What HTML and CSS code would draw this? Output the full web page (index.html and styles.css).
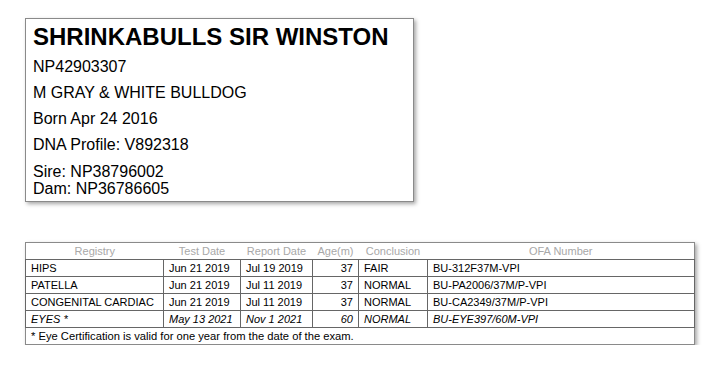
FILE: index.html
```html
<!DOCTYPE html>
<html>
<head>
<meta charset="utf-8">
<link rel="stylesheet" href="styles.css">
</head>
<body>
<div class="page">
  <div class="card">
    <h1 class="name">SHRINKABULLS SIR WINSTON</h1>
    <p class="line">NP42903307</p>
    <p class="line">M GRAY &amp; WHITE BULLDOG</p>
    <p class="line">Born Apr 24 2016</p>
    <p class="line">DNA Profile: V892318</p>
    <p class="line parents">Sire: NP38796002<br>Dam: NP36786605</p>
  </div>
  <table class="ofa">
    <colgroup>
      <col class="c-reg"><col class="c-test"><col class="c-rep"><col class="c-age"><col class="c-con"><col class="c-num">
    </colgroup>
    <thead>
      <tr><th>Registry</th><th>Test Date</th><th>Report Date</th><th>Age(m)</th><th>Conclusion</th><th>OFA Number</th></tr>
    </thead>
    <tbody>
      <tr><td>HIPS</td><td>Jun 21 2019</td><td>Jul 19 2019</td><td class="num">37</td><td>FAIR</td><td>BU-312F37M-VPI</td></tr>
      <tr><td>PATELLA</td><td>Jun 21 2019</td><td>Jul 11 2019</td><td class="num">37</td><td>NORMAL</td><td>BU-PA2006/37M/P-VPI</td></tr>
      <tr><td>CONGENITAL CARDIAC</td><td>Jun 21 2019</td><td>Jul 11 2019</td><td class="num">37</td><td>NORMAL</td><td>BU-CA2349/37M/P-VPI</td></tr>
      <tr class="eyes"><td>EYES *</td><td>May 13 2021</td><td>Nov 1 2021</td><td class="num">60</td><td>NORMAL</td><td>BU-EYE397/60M-VPI</td></tr>
      <tr class="note"><td colspan="6">* Eye Certification is valid for one year from the date of the exam.</td></tr>
    </tbody>
  </table>
</div>
</body>
</html>
```

FILE: styles.css
```css
html, body {
  margin: 0;
  padding: 0;
  background: #fff;
}
body {
  font-family: "Liberation Sans", Arial, sans-serif;
  color: #000;
}
.page {
  padding: 18px 0 0 25px;
  display: flex;
  flex-direction: column;
  align-items: flex-start;
  gap: 40px;
}
.card {
  width: 373px;
  border: 1px solid #8a8a8a;
  padding: 4px 7px 4px 7px;
  box-shadow: 2px 2px 4px rgba(0, 0, 0, 0.35);
}
.name {
  margin: 0;
  font-size: 24px;
  line-height: 27px;
  font-weight: bold;
}
.line {
  margin: 8px 0 0 0;
  font-size: 16px;
  line-height: 18px;
}
.line + .line {
  margin-top: 8px;
}
.line.parents {
  line-height: 17px;
  margin-top: 9px;
}
.ofa {
  width: 670px;
  table-layout: fixed;
  border-collapse: collapse;
  border: 1px solid #8a8a8a;
  box-shadow: 2px 2px 4px rgba(0, 0, 0, 0.35);
  font-size: 11px;
  line-height: 14px;
}
.c-reg { width: 138px; }
.c-test { width: 77px; }
.c-rep { width: 72px; }
.c-age { width: 46px; }
.c-con { width: 69px; }
.ofa th {
  font-weight: normal;
  color: #a8a8a8;
  text-align: center;
  padding: 1px 2px;
  border-bottom: 1px solid #666;
  white-space: nowrap;
}
.ofa td {
  padding: 1px 5px;
  border: 1px solid #666;
  text-align: left;
  white-space: nowrap;
}
.ofa td.num {
  text-align: right;
}
.eyes td {
  font-style: italic;
}
.note td {
  font-size: 11.2px;
  border-color: #666 #8a8a8a #8a8a8a #8a8a8a;
}
```
